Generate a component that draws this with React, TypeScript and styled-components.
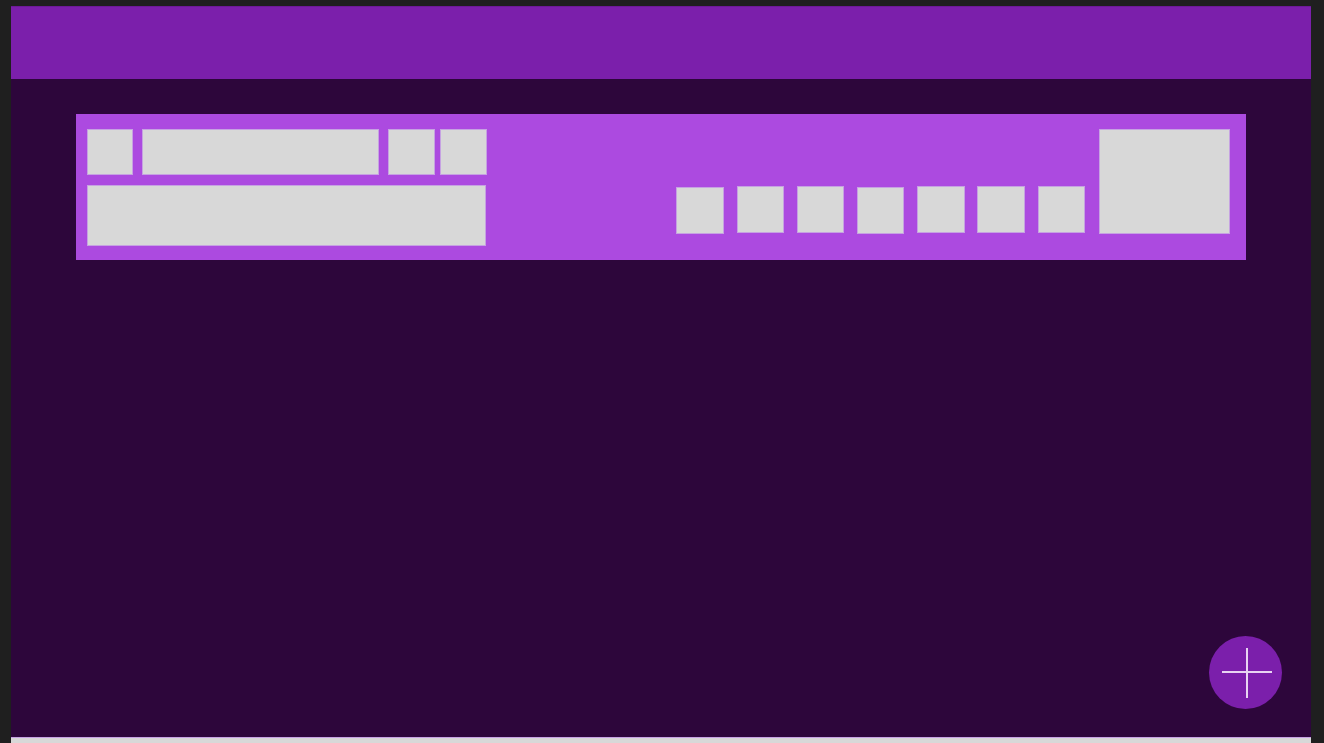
import React from "react";
import styled, { createGlobalStyle } from "styled-components";

const Global = createGlobalStyle`
  html, body { margin: 0; padding: 0; }
  body {
    background: #1f1f1f;
    font-family: "Liberation Sans", Arial, sans-serif;
    overflow: hidden;
  }
`;

const Page = styled.div`
  height: 743px;
  padding: 6px 13px 0 11px;
  box-sizing: border-box;
  overflow: hidden;
`;

const Frame = styled.div`
  width: 1300px;
  display: flex;
  flex-direction: column;
`;

const Header = styled.header`
  height: 73px;
  background: #7b1fab;
  border-top: 1px solid #6c1a97;
  box-sizing: border-box;
  box-shadow: 0 1px 0 #5a1480;
`;

const Main = styled.main`
  position: relative;
  height: 658px;
  background: #2d063b;
  padding: 35px 0 0 65px;
  box-sizing: border-box;
`;

const Card = styled.section`
  width: 1170px;
  box-sizing: border-box;
  background: #ac4ae0;
  padding: 15px 16px 14px 11px;
  display: flex;
  justify-content: space-between;
  align-items: flex-start;
`;

const LeftCol = styled.div`
  width: 399px;
  display: flex;
  flex-direction: column;
  gap: 10px;
`;

const TopRow = styled.div`
  display: flex;
  height: 46px;
`;

const Block = styled.div<{ $w: number; $h: number; $ml?: number; $mb?: number }>`
  width: ${(p) => p.$w}px;
  height: ${(p) => p.$h}px;
  margin-left: ${(p) => p.$ml ?? 0}px;
  margin-bottom: ${(p) => p.$mb ?? 0}px;
  flex: none;
  background: #d8d8d8;
  border: 1px solid #c6a2e2;
  box-sizing: border-box;
`;

const RightGroup = styled.div`
  display: flex;
  align-items: flex-end;
  height: 105px;
`;

const Buttons = styled.div`
  display: flex;
  align-items: flex-end;
  gap: 12.7px;
  margin-right: 14px;
`;

const Footer = styled.footer`
  height: 30px;
  background: #d8d8d8;
  border-top: 1px solid #c6a2e2;
  box-sizing: border-box;
`;

const Fab = styled.button`
  position: absolute;
  right: 29px;
  bottom: 28px;
  width: 73px;
  height: 73px;
  border-radius: 50%;
  border: none;
  padding: 0;
  background: #7b1fab;
  display: flex;
  align-items: center;
  justify-content: center;
  cursor: pointer;
`;

const smallDrops = [1, 0, 0, 1, 0, 0, 0];

export default function App() {
  return (
    <>
      <Global />
      <Page>
        <Frame>
          <Header />
          <Main>
            <Card>
              <LeftCol>
                <TopRow>
                  <Block $w={46} $h={46} />
                  <Block $w={237} $h={46} $ml={9} />
                  <Block $w={47} $h={46} $ml={9} />
                  <Block $w={47} $h={46} $ml={5} />
                </TopRow>
                <Block $w={399} $h={61} />
              </LeftCol>
              <RightGroup>
                <Buttons>
                  {smallDrops.map((d, i) => (
                    <Block key={i} $w={47.5} $h={47} $mb={d ? 0 : 1} />
                  ))}
                </Buttons>
                <Block $w={131} $h={105} />
              </RightGroup>
            </Card>
            <Fab aria-label="Add">
              <svg width="52" height="52" viewBox="0 0 52 52">
                <path d="M27 1 V51 M2 25 H52" stroke="#e8d4f2" strokeWidth="2" fill="none" />
              </svg>
            </Fab>
          </Main>
          <Footer />
        </Frame>
      </Page>
    </>
  );
}
